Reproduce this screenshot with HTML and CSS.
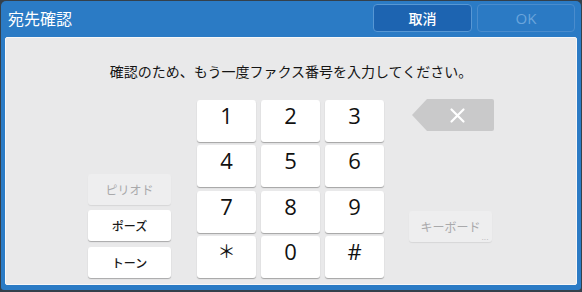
FILE: index.html
```html
<!DOCTYPE html>
<html lang="ja">
<head>
<meta charset="utf-8">
<link rel="stylesheet" href="styles.css">
</head>
<body>
<div class="frame">
  <div class="header">
    <div class="title">宛先確認</div>
    <button class="hbtn cancel">取消</button>
    <button class="hbtn ok">OK</button>
  </div>
  <div class="panel">
    <div class="msg">確認のため、もう一度ファクス番号を入力してください。</div>
    <div class="pad-area">
      <div class="left-col">
        <div class="sbtn disabled">ピリオド</div>
        <div class="sbtn">ポーズ</div>
        <div class="sbtn">トーン</div>
      </div>
      <div class="keypad">
        <div class="key">1</div>
        <div class="key">2</div>
        <div class="key">3</div>
        <div class="key">4</div>
        <div class="key">5</div>
        <div class="key">6</div>
        <div class="key">7</div>
        <div class="key">8</div>
        <div class="key">9</div>
        <div class="key star">＊</div>
        <div class="key">0</div>
        <div class="key">#</div>
      </div>
      <div class="right-col">
        <div class="backspace">
          <svg width="82" height="32" viewBox="0 0 82 32">
            <path d="M0 16 L15 0 H80 A2 2 0 0 1 82 2 V30 A2 2 0 0 1 80 32 H15 Z" fill="#c9c9ca"/>
            <path d="M39.5 10.5 L51.5 22.5 M51.5 10.5 L39.5 22.5" stroke="#ffffff" stroke-width="2.2" stroke-linecap="round"/>
          </svg>
        </div>
        <div class="sbtn disabled kbd">キーボード<span class="dots">•••</span></div>
      </div>
    </div>
  </div>
</div>
</body>
</html>
```

FILE: styles.css
```css
* { box-sizing: border-box; }
html, body { margin: 0; padding: 0; }
body {
  width: 582px;
  height: 292px;
  background: #34404b;
  overflow: hidden;
  font-family: "Noto Sans CJK JP", "Noto Sans", sans-serif;
}
.frame {
  margin: 1px 1px 0 1px;
  width: 580px;
  height: 289px;
  background: #2b7bc5;
  border-radius: 5px 5px 3px 3px;
  padding: 0 4px 5px 4px;
  display: flex;
  flex-direction: column;
}
.header {
  height: 36px;
  display: flex;
  align-items: center;
  padding-left: 3px;
}
.title {
  flex: 1;
  color: #ffffff;
  font-size: 16px;
  line-height: 20px;
  margin-top: -3px;
}
.hbtn {
  height: 28px;
  border-radius: 4px;
  font-family: "Noto Sans CJK JP", sans-serif;
  font-size: 14px;
  padding: 0;
  margin-top: -2px;
}
.cancel {
  width: 99px;
  background: #1d64b1;
  border: 1px solid #5797d4;
  color: #ffffff;
  font-weight: 500;
}
.ok {
  width: 98px;
  margin-left: 5px;
  margin-right: 2px;
  background: #2b7ac4;
  border: 1px solid #4a8ccd;
  color: #6aa5dc;
  font-family: "Open Sans", sans-serif;
  font-size: 15px;
}
.panel {
  flex: 1;
  background: #e9e9ea;
  border: 1px solid #f7f7f8;
  border-radius: 2px;
  padding-top: 23px;
}
.msg {
  text-align: center;
  font-size: 14px;
  line-height: 20px;
  color: #151515;
}
.pad-area {
  margin-top: 19px;
  display: flex;
  justify-content: center;
}
.left-col {
  width: 83px;
  margin-right: 26px;
  display: flex;
  flex-direction: column;
  justify-content: flex-end;
  gap: 5.5px;
}
.sbtn {
  position: relative;
  height: 31px;
  background: #ffffff;
  border-radius: 3px;
  box-shadow: 0 1px 1px rgba(0, 0, 0, 0.28);
  display: flex;
  align-items: center;
  justify-content: center;
  font-size: 12px;
  color: #1a1a1a;
  font-weight: 500;
}
.sbtn.disabled {
  background: #eeeeef;
  color: #a9a9ab;
  box-shadow: 0 1px 1px rgba(0, 0, 0, 0.08);
  font-weight: 400;
}
.keypad {
  width: 187px;
  display: grid;
  grid-template-columns: repeat(3, 59px);
  grid-auto-rows: 42px;
  column-gap: 5px;
  row-gap: 3.33px;
}
.key {
  background: #ffffff;
  border-radius: 3px;
  box-shadow: 0 1px 1px rgba(0, 0, 0, 0.3);
  display: flex;
  align-items: center;
  justify-content: center;
  padding-bottom: 12px;
  font-family: "Open Sans", sans-serif;
  font-size: 22px;
  color: #111111;
}
.key.star {
  font-family: "Noto Sans CJK JP", sans-serif;
  font-size: 18px;
  padding-bottom: 14px;
}
.right-col {
  width: 85px;
  margin-left: 25px;
  display: flex;
  flex-direction: column;
  justify-content: space-between;
}
.backspace {
  margin-left: 3px;
  margin-top: -1px;
  height: 32px;
  display: flex;
}
.kbd {
  width: 83px;
  margin-bottom: 36px;
}
.dots {
  position: absolute;
  right: 3px;
  bottom: 0px;
  font-size: 4px;
  letter-spacing: 1px;
  color: #bdbdbf;
  line-height: 6px;
}
```
